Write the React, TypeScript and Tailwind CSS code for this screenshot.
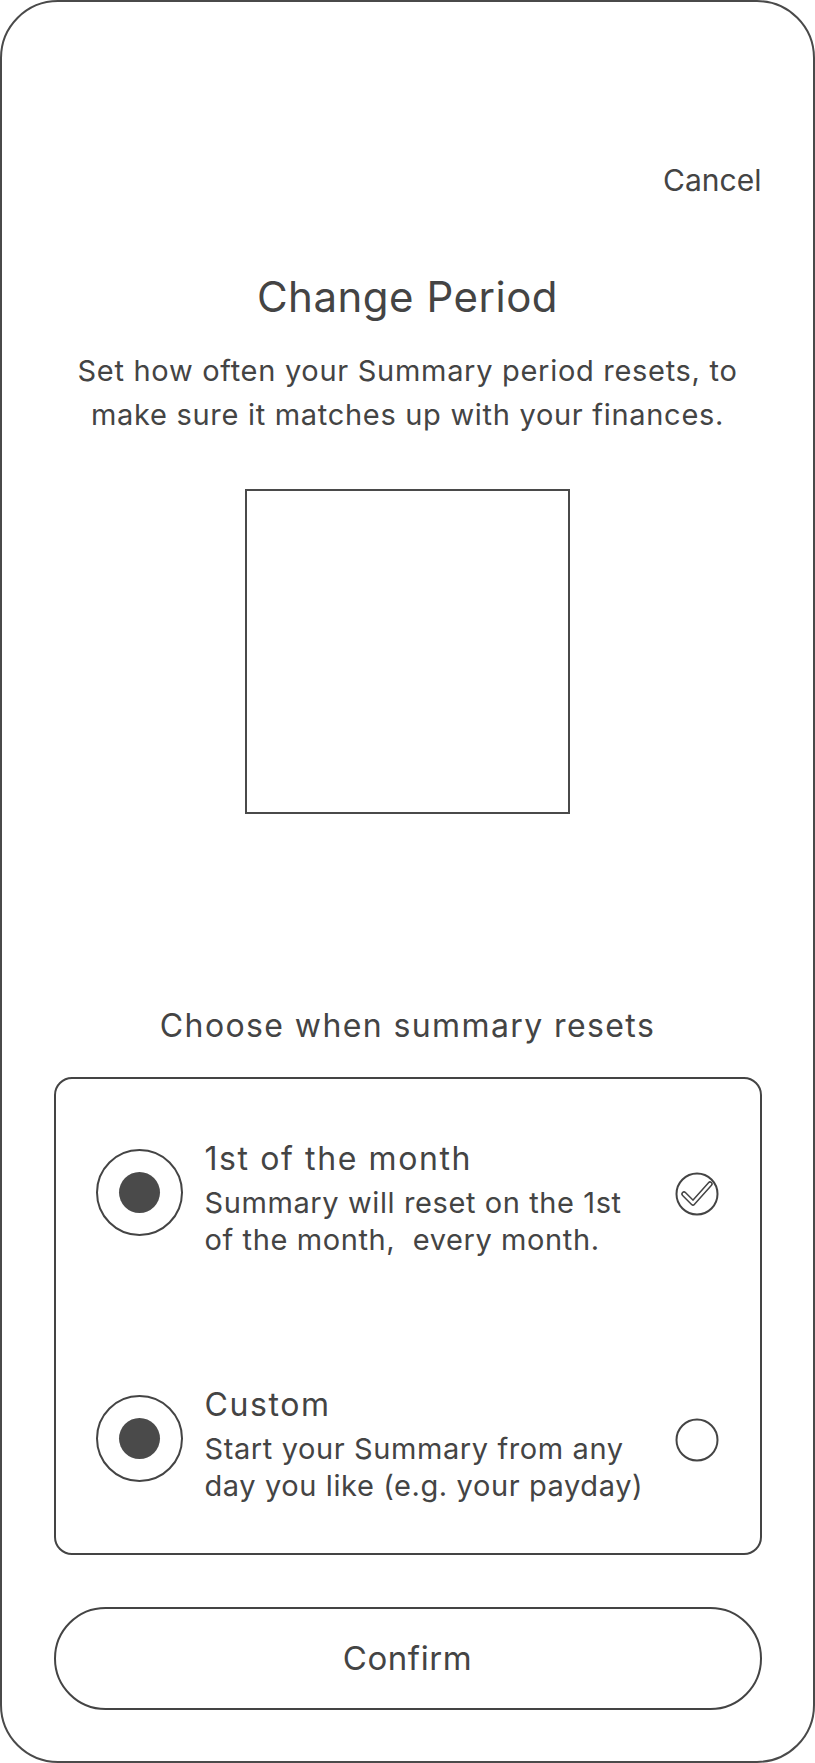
export default function App() {
  const font = { fontFamily: 'Inter, "Noto Sans", sans-serif' }
  return (
    <div className="w-[815px] h-[1763px] bg-white" style={font}>
      <div className="box-border h-full w-full rounded-[58px] border-2 border-[#4a4a4a] flex flex-col items-center text-[#444]">
        <div className="w-[708px] flex justify-end pt-[160px]">
          <span className="text-[30px] leading-[36px]">Cancel</span>
        </div>

        <h1 className="mt-[75px] text-[42px] leading-[48px] font-normal tracking-[0.5px]">Change Period</h1>

        <p className="mt-[28px] text-center text-[29px] leading-[44px] tracking-[0.7px]">
          Set how often your Summary period resets, to
          <br />
          make sure it matches up with your finances.
        </p>

        <div className="mt-[52px] w-[325px] h-[325px] border-2 border-[#4a4a4a]" />

        <p className="mt-[192px] text-[32px] leading-[40px] tracking-[1.4px]">Choose when summary resets</p>

        <div className="mt-[31px] box-border w-[708px] h-[478px] rounded-[18px] border-2 border-[#444] flex flex-col gap-[127px] pt-[60px] pl-[40px] pr-[41px]">
          <Option
            title="1st of the month"
            lines={['Summary will reset on the 1st', 'of the month,  every month.']}
            checked
          />
          <Option
            title="Custom"
            lines={['Start your Summary from any', 'day you like (e.g. your payday)']}
          />
        </div>

        <button className="mt-[52px] box-border w-[708px] h-[103px] rounded-full border-2 border-[#444] text-[33px] tracking-[0.6px] text-[#444]">
          Confirm
        </button>
      </div>
    </div>
  )
}

function Option({ title, lines, checked }: { title: string; lines: string[]; checked?: boolean }) {
  return (
    <div className="flex items-start">
      <div className="mt-[10px] w-[87px] h-[87px] shrink-0 rounded-full border-2 border-[#444] flex items-center justify-center">
        <div className="w-[41px] h-[41px] rounded-full bg-[#4a4a4a]" />
      </div>
      <div className="ml-[22px] flex-1">
        <div className="text-[32px] leading-[40px] tracking-[1.6px]">{title}</div>
        <div className="mt-[5px] text-[29px] leading-[37px] tracking-[0.6px] whitespace-pre">
          {lines[0]}
          <br />
          {lines[1]}
        </div>
      </div>
      <svg width="44" height="44" viewBox="0 0 44 44" className="mt-[33px] shrink-0">
        <circle cx="22" cy="22" r="20.5" fill="none" stroke="#444" strokeWidth="2" />
        {checked && (
          <>
            <path d="M9 22 L18 31 L35 12" fill="none" stroke="#444" strokeWidth="5.5" strokeLinecap="round" strokeLinejoin="round" />
            <path d="M9 22 L18 31 L35 12" fill="none" stroke="#fff" strokeWidth="2.5" strokeLinecap="round" strokeLinejoin="round" />
          </>
        )}
      </svg>
    </div>
  )
}
